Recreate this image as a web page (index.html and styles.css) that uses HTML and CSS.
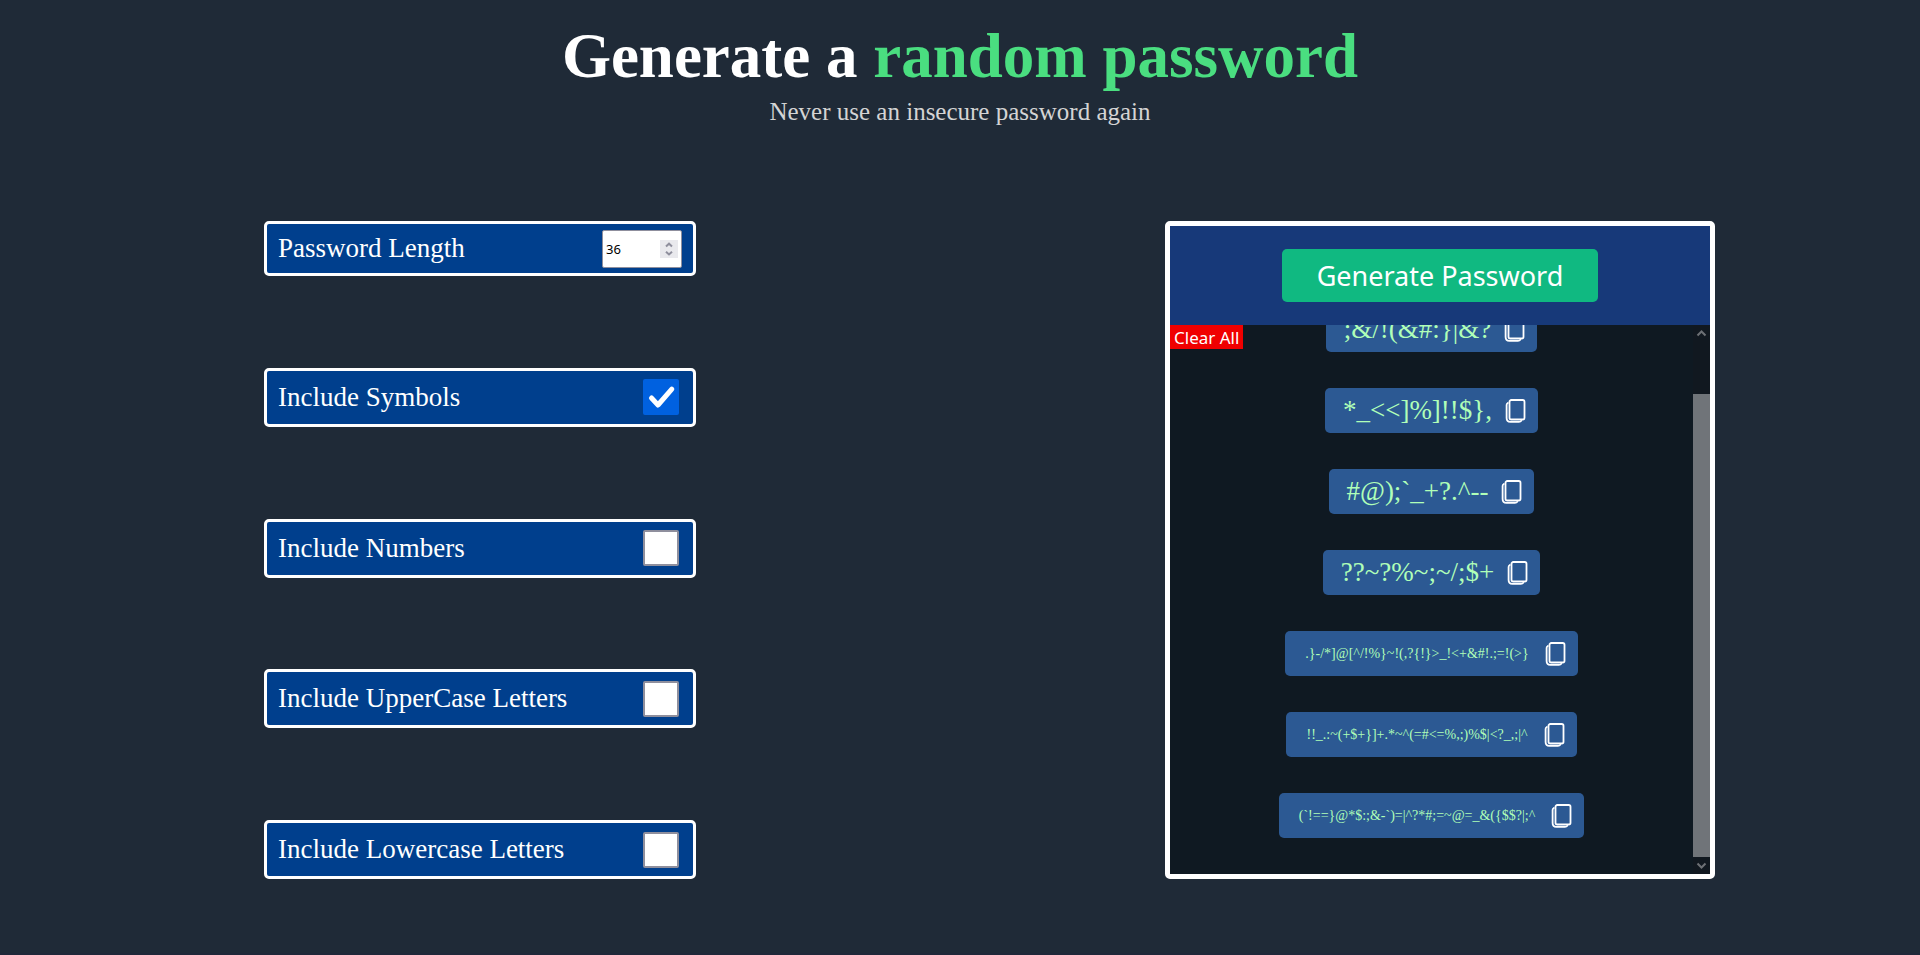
FILE: index.html
```html
<!DOCTYPE html>
<html lang="en">
<head>
<meta charset="utf-8">
<title>Password Generator</title>
<link rel="stylesheet" href="styles.css">
</head>
<body>
<svg class="sprite">
  <symbol id="copy" viewBox="0 0 24 24" fill="none" stroke="currentColor" stroke-linejoin="round" stroke-linecap="round">
    <rect x="4.500" y="1" width="15" height="19.500" rx="1.800" stroke-width="1.800"/>
    <path d="M2.800 4 C2 4.400 1.600 5 1.600 6 V19 C1.600 21.400 3 22.900 5.400 22.900 H14 C15 22.900 15.800 22.600 16.200 21.900" stroke-width="1.800"/>
  </symbol>
</svg>
<div class="page">
  <header class="hero">
    <h1 class="title">Generate a <span class="accent">random password</span></h1>
    <p class="subtitle">Never use an insecure password again</p>
  </header>
  <main class="columns">
    <form class="options">
      <div class="option option-length"><label for="length">Password Length</label>
        <span class="number"><input id="length" type="number" value="36">
          <svg class="spinner" viewBox="0 0 18 18" aria-hidden="true"><path d="M6 6.500 9 3.700l3 2.800M6 11.700l3 2.800 3-2.800"/></svg></span></div>
      <div class="option"><label for="symbols">Include Symbols</label>
        <span class="tick"><input id="symbols" type="checkbox" checked>
          <svg class="tick-mark" viewBox="0 0 36 36" aria-hidden="true"><path d="M8.500 19l6.500 7L28.800 10.200"/></svg></span></div>
      <div class="option"><label for="numbers">Include Numbers</label>
        <span class="tick"><input id="numbers" type="checkbox"></span></div>
      <div class="option"><label for="upper">Include UpperCase Letters</label>
        <span class="tick"><input id="upper" type="checkbox"></span></div>
      <div class="option"><label for="lower">Include Lowercase Letters</label>
        <span class="tick"><input id="lower" type="checkbox"></span></div>
    </form>
    <section class="output">
      <div class="panel">
        <div class="panel-head"><button type="button" class="generate">Generate Password</button></div>
        <div class="panel-body">
          <button type="button" class="clear">Clear All</button>
          <div class="scroller">
            <ul class="list">
              <li class="item"><span>;&amp;/!(&amp;#:}|&amp;?</span><button type="button" class="copy" aria-label="Copy"><svg><use href="#copy"/></svg></button></li>
              <li class="item"><span>*_&lt;&lt;]%]!!$},</span><button type="button" class="copy" aria-label="Copy"><svg><use href="#copy"/></svg></button></li>
              <li class="item"><span>#@);`_+?.^--</span><button type="button" class="copy" aria-label="Copy"><svg><use href="#copy"/></svg></button></li>
              <li class="item"><span>??~?%~;~/;$+</span><button type="button" class="copy" aria-label="Copy"><svg><use href="#copy"/></svg></button></li>
              <li class="item long"><span>.}-/*]@[^/!%}~!(,?{!}&gt;_!&lt;+&amp;#!.;=!(&gt;}</span><button type="button" class="copy" aria-label="Copy"><svg><use href="#copy"/></svg></button></li>
              <li class="item long"><span>!!_.:~(+$+}]+.*~^(=#&lt;=%,;)%$|&lt;?_,;|^</span><button type="button" class="copy" aria-label="Copy"><svg><use href="#copy"/></svg></button></li>
              <li class="item long"><span>(`!==}@*$:;&amp;-`)=|^?*#;=~@=_&amp;({$$?|;^</span><button type="button" class="copy" aria-label="Copy"><svg><use href="#copy"/></svg></button></li>
            </ul>
          </div>
          <div class="scrollbar" aria-hidden="true">
            <svg viewBox="0 0 17 17"><path d="M4.500 10.500 8.500 6.500l4 4"/></svg>
            <div class="track"><div class="thumb"></div></div>
            <svg viewBox="0 0 17 17"><path d="M4.500 6.500 8.500 10.500l4-4"/></svg>
          </div>
        </div>
      </div>
    </section>
  </main>
</div>
</body>
</html>
```
FILE: styles.css
```css
* { box-sizing: border-box; }
body {
  margin: 0;
  background: #1f2739;
  color: #fff;
  font-family: "Liberation Serif", "Times New Roman", serif;
}
.sprite { display: none; }
.page {
  display: flex;
  flex-direction: column;
  height: calc(100vh - 2px);
  min-height: 720px;
  padding: 20px 0 74px;
  background: #1f2a37;
}
.hero { text-align: center; }
.title { margin: 0; font-size: 63px; line-height: 72px; }
.accent { color: #4ade80; }
.subtitle { margin: 4px 0 0; font-size: 25px; line-height: 32px; color: #d4d4d4; }
.columns {
  flex: 1;
  min-height: 0;
  display: grid;
  grid-template-columns: 1fr 1fr;
  justify-items: center;
  margin-top: 93px;
}
.options {
  width: 45%;
  display: flex;
  flex-direction: column;
  justify-content: space-between;
}
.option {
  display: flex;
  align-items: center;
  justify-content: space-between;
  min-height: 59px;
  padding: 0 14px 0 11px;
  border: 3px solid #fff;
  border-radius: 5px;
  background: #003f8d;
  font-size: 27px;
}
.option-length { min-height: 55px; padding-right: 11px; }
.number { position: relative; display: flex; }
.number input {
  width: 80px;
  height: 38px;
  padding: 0 3px;
  border: 1px solid #8f8f9d;
  border-radius: 2px;
  background: #fff;
  color: #000;
  font: 13px "Noto Sans", sans-serif;
  appearance: textfield;
}
.number input::-webkit-inner-spin-button { appearance: none; }
.spinner {
  position: absolute;
  right: 4px;
  top: 10px;
  width: 18px;
  height: 18px;
  background: #e9e9ed;
  fill: none;
  stroke: #8f8f9d;
  stroke-width: 2;
}
.tick { position: relative; display: flex; }
.tick input {
  appearance: none;
  width: 36px;
  height: 36px;
  margin: 0;
  border: 2px solid #8f8f9d;
  border-radius: 2px;
  background: #fff;
}
.tick input:checked { border-color: #0061e0; background: #0061e0; }
.tick-mark {
  position: absolute;
  inset: 0;
  fill: none;
  stroke: #fff;
  stroke-width: 5;
  stroke-linecap: round;
  stroke-linejoin: round;
  pointer-events: none;
}
.output { width: 100%; min-height: 0; display: flex; justify-content: center; }
.panel {
  width: 550px;
  max-width: 100%;
  display: flex;
  flex-direction: column;
  border: 5px solid #fff;
  border-radius: 5px;
  background: #0f1922;
}
.panel-head { display: flex; justify-content: center; padding: 23px 0; background: #173979; }
.generate {
  height: 53px;
  padding: 0 35px;
  border: 0;
  border-radius: 5px;
  background: #10b981;
  color: #fff;
  font: 27px "Noto Sans", sans-serif;
}
.panel-body { position: relative; flex: 1; min-height: 0; display: flex; }
.clear {
  position: absolute;
  left: 0;
  top: 0;
  height: 24px;
  padding: 0 4px;
  border: 0;
  background: #f00000;
  color: #fff;
  font: 17px "Noto Sans", sans-serif;
}
/* Reversed column keeps the newest password in view. */
.scroller {
  flex: 1;
  display: flex;
  flex-direction: column-reverse;
  overflow-y: auto;
  scrollbar-width: none;
}
.list {
  display: flex;
  flex-direction: column;
  align-items: center;
  gap: 36px;
  margin: 0;
  padding: 36px 0;
  list-style: none;
}
.item {
  display: flex;
  align-items: center;
  gap: 13px;
  height: 45px;
  flex-shrink: 0;
  padding: 0 9px 0 18px;
  border-radius: 5px;
  background: #2c5993;
  color: #b0ffb8;
  font-size: 27px;
}
.long { gap: 16px; padding-left: 20px; font-size: 14px; }
.copy { display: flex; padding: 0; border: 0; background: none; color: #fff; }
.copy svg { width: 24px; height: 24px; }
.scrollbar { width: 17px; display: flex; flex-direction: column; background: #111820; }
.scrollbar svg { height: 17px; fill: none; stroke: #6d7075; stroke-width: 2; }
.track { flex: 1; display: flex; align-items: flex-end; }
.thumb { width: 100%; height: 90%; background: #707479; }
```
